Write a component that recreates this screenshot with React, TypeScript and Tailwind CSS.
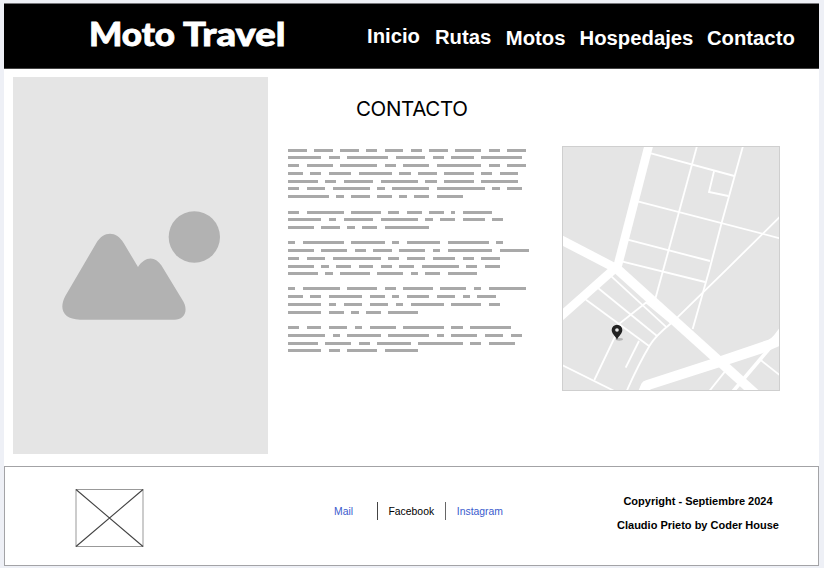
const navItems = [
  { label: "Inicio", cls: "ml-[363px] pt-[21px]" },
  { label: "Rutas", cls: "ml-[15px] pt-[22px]" },
  { label: "Motos", cls: "ml-[14.5px] pt-[23px]" },
  { label: "Hospedajes", cls: "ml-[14px] pt-[23px]" },
  { label: "Contacto", cls: "ml-[13.5px] pt-[23px]" },
];

// Each line: distance to the next line, then the length of every word in characters.
const lines: { step: number; words: number[] }[] = [
  { step: 7, words: [5, 5, 5, 3, 5, 3, 5, 7, 3, 5] },
  { step: 8, words: [9, 3, 11, 8, 3, 6, 11] },
  { step: 8, words: [3, 7, 10, 3, 7, 12, 3, 5] },
  { step: 8, words: [4, 3, 6, 9, 3, 5, 8, 3, 5] },
  { step: 7, words: [8, 3, 8, 10, 3, 8, 10] },
  { step: 8, words: [3, 5, 10, 2, 10, 13, 2, 4] },
  { step: 16, words: [11, 2, 5, 4, 2, 4, 7] },
  { step: 7, words: [3, 10, 8, 3, 4, 4, 1, 8] },
  { step: 8, words: [9, 2, 8, 10, 2, 4, 6, 3] },
  { step: 15, words: [7, 5, 2, 4, 12] },
  { step: 8, words: [2, 11, 9, 2, 9, 11, 2] },
  { step: 8, words: [7, 7, 3, 5, 7, 2, 12, 8] },
  { step: 8, words: [3, 5, 13, 3, 5, 6, 3, 5] },
  { step: 7, words: [7, 2, 4, 4, 3, 4, 10, 3, 4] },
  { step: 15, words: [8, 2, 8, 7, 2, 4, 8] },
  { step: 8, words: [2, 10, 8, 3, 8, 7, 2, 10] },
  { step: 8, words: [4, 3, 9, 4, 2, 6, 5, 2, 5] },
  { step: 8, words: [9, 2, 5, 5, 2, 9, 8, 3] },
  { step: 15, words: [9, 4, 2, 4, 8] },
  { step: 8, words: [3, 4, 5, 2, 7, 11, 3, 11] },
  { step: 8, words: [10, 2, 9, 11, 2, 7, 5, 3] },
  { step: 7, words: [8, 7, 3, 9, 12, 3, 7] },
  { step: 3, words: [9, 3, 8, 9] },
];
const CHAR = 3.717;

function Header() {
  return (
    <header className="relative flex h-[66px] items-start border-y border-t-[#77777b] border-b-[#444] bg-black text-white">
      <svg className="absolute left-[84px] top-[8px]" width="204" height="42" role="img" aria-label="Moto Travel">
        <g fill="#fff" stroke="#fff" strokeWidth="0.8" fontFamily="Lato, sans-serif" fontWeight="900" fontSize="32">
          <text x="1" y="33.6" textLength="86" lengthAdjust="spacingAndGlyphs">
            Moto
          </text>
          <text x="95" y="33.6" textLength="102.5" lengthAdjust="spacingAndGlyphs">
            Travel
          </text>
        </g>
      </svg>
      <nav className="flex items-start text-[20.3px] font-bold leading-[23px]">
        {navItems.map((n) => (
          <a key={n.label} className={n.cls}>
            {n.label}
          </a>
        ))}
      </nav>
    </header>
  );
}

function ImagePlaceholder() {
  return (
    <div className="mt-[8px] ml-[9px] flex h-[377px] w-[255px] items-center justify-center bg-[#e5e5e5]">
      <svg className="ml-px" width="158.33" height="109" viewBox="185 63 475 327">
        <g fill="#b2b2b2">
          <circle cx="582" cy="141" r="77" />
          <path d="M288 159 C310 122 348 122 370 159 L413 231 C433 199 464 196 483 226 L545 328 C568 362 551 389 522 389 L239 389 C190 389 174 358 195 318 Z" />
        </g>
      </svg>
    </div>
  );
}

function Paragraphs() {
  return (
    <div className="mt-[26px] ml-[20px]">
      {lines.map((l, i) => (
        <div key={i} className="flex items-start" style={{ height: l.step, gap: CHAR * 2 }}>
          {l.words.map((w, j) => (
            <span key={j} className="block h-[3px] shrink-0 bg-[#a9a9a9]" style={{ width: w * CHAR }} />
          ))}
        </div>
      ))}
    </div>
  );
}

function StreetMap() {
  return (
    <svg className="mt-[77px] ml-[31px] shrink-0" width="218" height="245" viewBox="21 18 654 735">
      <rect x="21" y="18" width="654" height="735" fill="#e5e5e5" />
      <g fill="none" stroke="#fff" strokeWidth="5.5">
        <path d="M288 40 L538 108" />
        <path d="M426 18 L300 480" />
        <path d="M564 18 L500 248 L463 390 L413 567" />
        <path d="M477 94 L462 156 L520 168" />
        <path d="M248 184 L675 295" />
        <path d="M218 299 L465 363" />
        <path d="M200 364 L450 426" />
        <path d="M675 230 L515 388 L355 544" />
        <path d="M170 410 L335 562" />
        <path d="M272 486 L348 549" />
        <path d="M130 445 L307 589" />
        <path d="M93 479 L283 619" />
        <path d="M280 482 L188 555 L180 590 L118 720" />
        <path d="M215 753 C245 685 270 640 285 615 C305 582 330 565 360 540" />
        <path d="M252 603 L212 683" />
        <path d="M21 675 L178 753" />
        <path d="M515 688 L463 753" />
        <path d="M618 661 L675 706" />
        <path d="M648 620 L535 753" strokeWidth="11" />
      </g>
      <g fill="none" stroke="#fff">
        <path d="M282 14 L188 378" strokeWidth="26" />
        <path d="M15 298 L185 386" strokeWidth="27" />
        <path d="M192 374 L15 531" strokeWidth="26" />
        <path d="M172 374 L602 762" strokeWidth="29" />
      </g>
      <path
        d="M250 753 L259 731 Q263 724 273 721 L490 650 L640 599 Q650 595 657 586 L675 562 V617 L630 637 L515 675 L288 748 L280 753 Z"
        fill="#fff"
      />
      <rect x="22.5" y="19.5" width="651" height="732" fill="none" stroke="#cfcfcf" strokeWidth="3" />
      <ellipse cx="193" cy="598" rx="11" ry="4" fill="#b5b5b5" />
      <path
        d="M186 599 C181 588 170 581 170 570 A16 16 0 0 1 202 570 C202 581 191 588 186 599 Z"
        fill="#222"
      />
      <circle cx="186" cy="570" r="5.5" fill="#e9e9e9" />
    </svg>
  );
}

function Footer() {
  return (
    <footer className="mt-[12px] flex h-[100px] items-start border border-[#a3a3a6] bg-white">
      <svg className="mt-[22px] ml-[70px]" width="69" height="58" fill="none">
        <rect x="1" y="0.5" width="67" height="57" stroke="#999" />
        <path d="M1 0.5 L68 57.5 M68 0.5 L1 57.5" stroke="#444" strokeWidth="1.1" />
      </svg>
      <div className="mt-[35px] ml-[190px] flex h-[18px] w-[169px] items-center text-[10.4px] leading-[18px]">
        <a className="w-[43px] pt-[2px] text-[#3a5bcd]">Mail</a>
        <span className="h-[18px] w-px bg-[#444]" />
        <span className="ml-[11px] w-[57px] pt-[2px] text-black">Facebook</span>
        <span className="h-[18px] w-px bg-[#666]" />
        <a className="ml-[11px] pt-[2px] text-[#3a5bcd]">Instagram</a>
      </div>
      <div className="mt-[22px] ml-[108.5px] w-[173px] text-center text-[11px] font-bold leading-[24px] text-black">
        <p>Copyright - Septiembre 2024</p>
        <p>Claudio Prieto by Coder House</p>
      </div>
    </footer>
  );
}

export default function App() {
  return (
    <div className="h-[568px] w-[824px] overflow-hidden bg-[#eef0f6] pt-[3px] pl-[4px] font-['Liberation_Sans',Arial,sans-serif]">
      <div className="w-[815px] bg-white">
        <Header />
        <main className="flex items-start">
          <ImagePlaceholder />
          <section className="w-[263px]">
            <h1 className="mt-[25px] ml-[88px] font-[Inter,sans-serif] text-[20.5px] font-normal leading-[29px] tracking-[-0.35px] whitespace-nowrap text-black">
              CONTACTO
            </h1>
            <Paragraphs />
          </section>
          <StreetMap />
        </main>
        <Footer />
      </div>
    </div>
  );
}
